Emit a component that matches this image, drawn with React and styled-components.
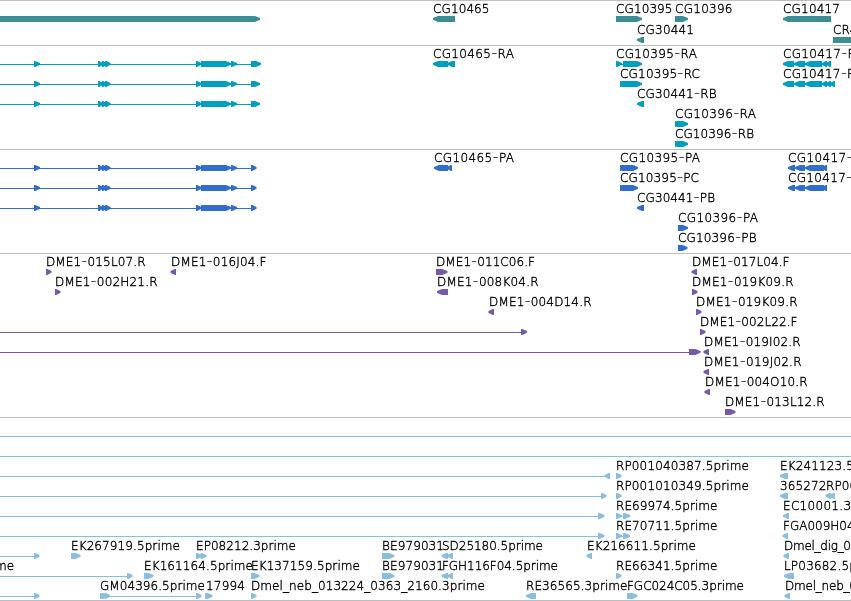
import React from "react";
import styled, { createGlobalStyle } from "styled-components";

const GlobalStyle = createGlobalStyle`
  html, body { margin: 0; padding: 0; background: #fff; overflow: hidden; }
`;

const Browser = styled.main`
  width: 851px;
  height: 601px;
  display: flex;
  flex-direction: column;
  background: #fff;
  overflow: hidden;
`;

const Track = styled.section`
  box-sizing: border-box;
  flex: 0 0 ${(p) => p.$height}px;
  border-top: 1px solid #bdbdbd;
  color: ${(p) => p.$color};
`;

const Chart = styled.svg`
  display: block;
  width: 851px;
  height: ${(p) => p.$height}px;
  overflow: hidden;
  will-change: transform;
`;

const Label = styled.text`
  font-family: "DejaVu Sans Light", "DejaVu Sans", sans-serif;
  font-weight: 200;
  font-size: 12px;
  fill: #000;
  stroke: #000;
  stroke-width: 0.38px;
  white-space: pre;
`;

const Dash = styled.tspan`
  font-size: 17px;
  stroke-width: 0;
`;

// Exon: [start, end, direction]; direction 0 draws a plain block.
function Exon({ span: [a, b, dir], y }) {
  const t = y + 15;
  const h = Math.min(5, b - a - 1.2);
  if (!dir) return <rect x={a} y={t} width={b - a} height={6} fill="currentColor" />;
  const base = dir > 0 ? a : b;
  const tip = dir > 0 ? b : a;
  const neck = tip - dir * h;
  return (
    <polygon
      fill="currentColor"
      points={`${base},${t} ${neck},${t} ${tip},${t + 2.1} ${tip},${t + 3.7} ${neck},${t + 6} ${base},${t + 6}`}
    />
  );
}

function LabelText({ text }) {
  const [head, tail] = text.split("-");
  if (!tail) return text;
  return (
    <>
      {head}
      <Dash>-</Dash>
      {tail}
    </>
  );
}

// Feature: { row, exons, line: connector span, label: [x, text, width] }
function Feature({ pitch, row, exons = [], line, label }) {
  const y = row * pitch;
  return (
    <g>
      {line && (
        <rect x={line[0]} y={y + 18} width={line[1] - line[0]} height={1} fill="currentColor" />
      )}
      {exons.map((e, i) => (
        <Exon key={i} span={e} y={y} />
      ))}
      {label && (
        <Label x={label[0]} y={y + 12} textLength={label[2]}>
          <LabelText text={label[1]} />
        </Label>
      )}
    </g>
  );
}

const f = (row, exons, label, line) => ({ row, exons, label, line });

const longGene = (row, end) =>
  f(
    row,
    [[34, 40, 1], [98, 103, 1], [102, 106.5, 1], [105, 110.5, 1], [196, 201.5, 1], [201, 231, 1], [231, 237, 1], [251, end, 1]],
    null,
    [0, 252]
  );

const genes = [
  f(0, [[-5, 260, 1]]),
  f(0, [[433, 455, -1]], [433, "CG10465", 56.5]),
  f(0, [[616, 642, 1]], [616, "CG10395", 56.5]),
  f(0, [[675, 688, 1]], [675, "CG10396", 57.5]),
  f(0, [[783, 831, -1]], [783, "CG10417", 57]),
  f(1, [[637, 644, -1]], [637, "CG30441", 57]),
  f(1, [[833, 860, 0]], [833, "CR4"]),
];

const transcripts = [
  longGene(0, 261),
  longGene(1, 260),
  longGene(2, 260),
  f(0, [[433, 448, -1], [447, 455, -1]], [433, "CG10465-RA", 81]),
  f(0, [[616, 622, 1], [623, 642, 1]], [616, "CG10395-RA", 81], [616, 625]),
  f(1, [[620, 624, 1], [622, 642, 1]], [620, "CG10395-RC", 80]),
  f(2, [[637, 644, -1]], [637, "CG30441-RB", 79.5]),
  f(3, [[675, 679, 1], [677, 688, 1]], [675, "CG10396-RA", 81]),
  f(4, [[675, 679, 1], [677, 688, 1]], [675, "CG10396-RB", 79]),
  f(0, [[783, 794, -1], [794, 805, -1], [805, 822, -1], [822, 827, -1], [826, 831, -1]], [783, "CG10417-RA", 81], [790, 830]),
  f(1, [[783, 794, -1], [794, 805, -1], [805, 822, -1], [822, 827, -1], [826, 831, -1], [830, 835, -1]], [783, "CG10417-RB", 80.5], [790, 834]),
];

const proteins = [
  longGene(0, 256.5),
  longGene(1, 256.5),
  longGene(2, 256.5),
  f(0, [[434, 448, -1], [447, 452, -1]], [434, "CG10465-PA", 80]),
  f(0, [[620, 624, 1], [622, 638, 1]], [620, "CG10395-PA", 80]),
  f(1, [[620, 624, 1], [622, 638, 1]], [620, "CG10395-PC", 79]),
  f(2, [[637, 644, -1]], [637, "CG30441-PB", 78]),
  f(3, [[678, 688, 1]], [678, "CG10396-PA", 80]),
  f(4, [[678, 687.5, 1]], [678, "CG10396-PB", 78.5]),
  f(0, [[788, 795, -1], [795, 805, -1], [805, 824, -1], [822, 827, -1]], [788, "CG10417-PA", 80]),
  f(1, [[788, 795, -1], [795, 805, -1], [805, 824, -1], [822, 827, -1]], [788, "CG10417-PB", 80]),
];

const clones = [
  f(0, [[46, 51.5, 1]], [46, "DME1-015L07.R", 99.5]),
  f(0, [[170.5, 176, -1]], [171, "DME1-016J04.F", 95.5]),
  f(0, [[436, 447.5, 1]], [436, "DME1-011C06.F", 99]),
  f(0, [[691.5, 697, -1]], [692, "DME1-017L04.F", 97.5]),
  f(1, [[55, 60.5, 1]], [55, "DME1-002H21.R", 102.5]),
  f(1, [[437, 448, -1]], [437, "DME1-008K04.R", 101.5]),
  f(1, [[692, 697.5, 1]], [692, "DME1-019K09.R", 101.5]),
  f(2, [[488.5, 494, -1]], [489, "DME1-004D14.R", 102.5]),
  f(2, [[696, 701.5, 1]], [696, "DME1-019K09.R", 101.5]),
  f(3, [[521, 527, 1]], null, [0, 523]),
  f(3, [[700, 705.5, 1]], [700, "DME1-002L22.F", 97.5]),
  f(4, [[689, 700.5, 1]], null, [0, 690]),
  f(4, [[703.5, 709, -1]], [704, "DME1-019I02.R", 96.5]),
  f(5, [[703.5, 709, -1]], [704, "DME1-019J02.R", 97.5]),
  f(6, [[704.5, 710, -1]], [705, "DME1-004O10.R", 102.5]),
  f(7, [[725, 735.5, 1]], [725, "DME1-013L12.R", 99.5]),
];

const ests = [
  f(0, [], null, [0, 851]),
  f(1, [], null, [0, 851]),
  f(2, [[604.5, 610, -1]], null, [0, 606]),
  f(2, [[616, 621.5, 1]], [616, "RP001040387.5prime", 133]),
  f(2, [[780, 788, -1]], [780, "EK241123.5prime", 109.5]),
  f(3, [[601, 606.5, 1]], null, [0, 603]),
  f(3, [[616, 621.5, 1]], [616, "RP001010349.5prime", 133]),
  f(3, [[780, 788, -1]], [780, "365272", 46.5]),
  f(3, [[825.5, 831, -1], [829.5, 835, -1]], [826, "RP001046113.5prime", 133]),
  f(4, [[598, 604.5, 1]], null, [0, 600]),
  f(4, [[616, 622, 1], [623, 630, 1]], [616, "RE69974.5prime", 101.5], [618, 624]),
  f(4, [[783, 789, -1]], [783, "EC10001.3prime", 104.5]),
  f(5, [[598, 604.5, 1]], null, [0, 600]),
  f(5, [[616, 622, 1], [623, 630, 1]], [616, "RE70711.5prime", 101.5], [618, 624]),
  f(5, [[782.5, 788, -1]], [783, "FGA009H04.5prime", 118]),
  f(6, [[34, 39.5, 1]], null, [0, 36]),
  f(6, [[71, 80.5, 1]], [71, "EK267919.5prime", 109]),
  f(6, [[196, 201.5, 1], [200.5, 206.5, 1]], [196, "EP08212.3prime", 100]),
  f(6, [[382, 394.5, 1]], [382, "BE979031", 62]),
  f(6, [[441.5, 448, -1], [447, 453, -1]], [442, "SD25180.5prime", 101]),
  f(6, [[586.5, 592, -1]], [587, "EK216611.5prime", 109]),
  f(6, [[783.5, 789, -1]], [784, "Dmel_dig_0", 67]),
  f(7, [[127, 132.5, 1]], [-5, "me"], [0, 129]),
  f(7, [[144, 153.5, 1]], [144, "EK161164.5prime", 109]),
  f(7, [[251, 259.5, 1]], [251, "EK137159.5prime", 109]),
  f(7, [[382, 394.5, 1]], [382, "BE979031", 62]),
  f(7, [[441.5, 448, -1], [447, 453, -1]], [442, "FGH116F04.5prime", 116]),
  f(7, [[616, 621.5, 1]], [616, "RE66341.5prime", 101.5]),
  f(7, [[784, 794, -1]], [784, "LP03682.5prime", 101]),
  f(8, [[34, 39.5, 1]], null, [0, 36]),
  f(8, [[100, 104, 1], [102, 106.5, 1], [104.5, 110, 1], [196, 201.5, 1]], [100, "GM04396.5prime", 105], [106, 198]),
  f(8, [[205, 212.5, 1]], [206, "17994", 39]),
  f(8, [[251, 256.5, 1]], [251, "Dmel_neb_013224_0363_2160.3prime", 234]),
  f(8, [[526, 536, -1]], [526, "RE36565.3prime", 101.5]),
  f(8, [[627, 637.5, 1]], [627, "FGC024C05.3prime", 117]),
  f(8, [[784.5, 790, -1]], [785, "Dmel_neb_0", 72]),
];

const tracks = [
  { id: "genes", height: 45, pitch: 21, color: "#3d8d94", features: genes },
  { id: "transcripts", height: 104, pitch: 20, color: "#009ebf", features: transcripts },
  { id: "proteins", height: 104, pitch: 20, color: "#316dcc", features: proteins },
  { id: "clones", height: 164, pitch: 20, color: "#7859a9", features: clones },
  { id: "ests", height: 183, pitch: 20, color: "#88bfe0", features: ests },
  { id: "end", height: 1, pitch: 20, color: "#000", features: [] },
];

export default function App() {
  return (
    <Browser>
      <GlobalStyle />
      {tracks.map((t) => (
        <Track key={t.id} $height={t.height} $color={t.color}>
          {t.features.length > 0 && (
            <Chart $height={t.height - 1}>
              {t.features.map((x, i) => (
                <Feature key={i} pitch={t.pitch} {...x} />
              ))}
            </Chart>
          )}
        </Track>
      ))}
    </Browser>
  );
}
